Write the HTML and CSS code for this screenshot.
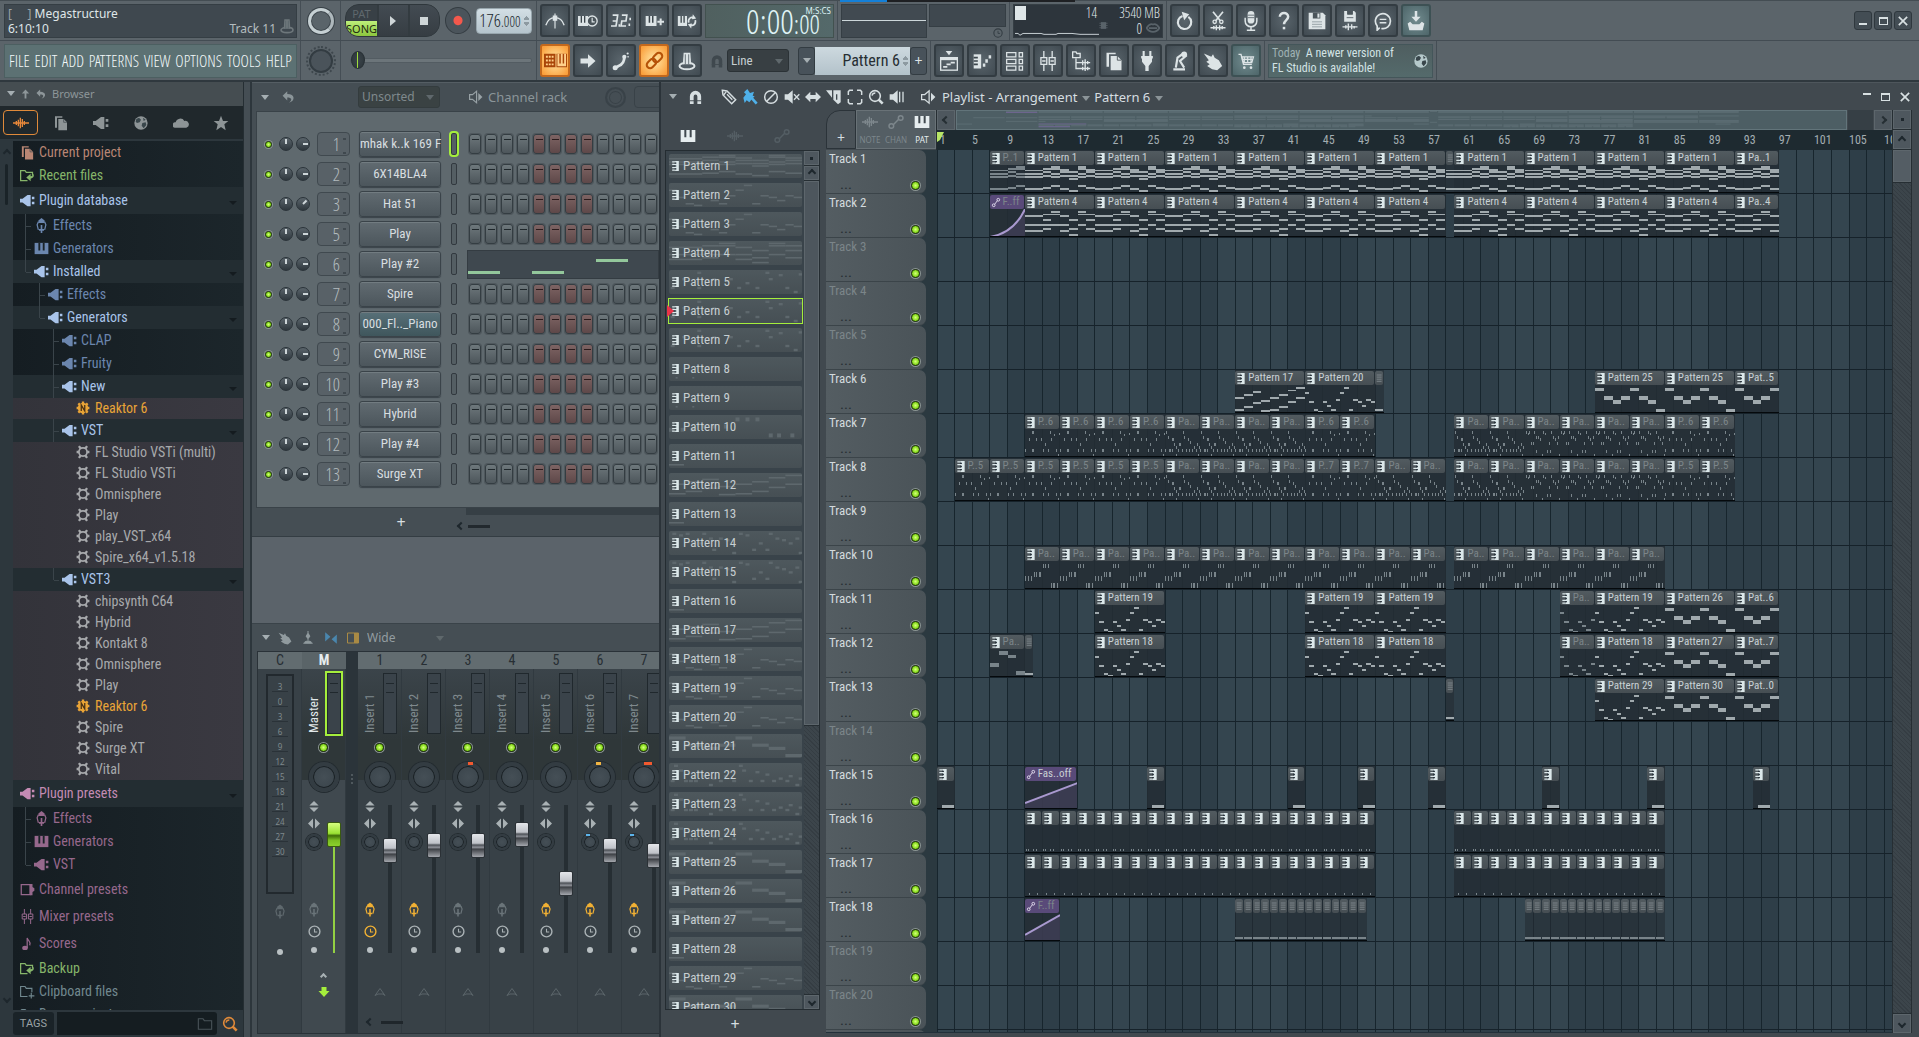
FILE: index.html
```html
<!DOCTYPE html>
<html lang="en">
<head>
<meta charset="utf-8">
<title>Megastructure</title>
<link rel="stylesheet" href="styles.css">
</head>
<body>
<svg class="sprite" aria-hidden="true">
<defs>
<symbol id="i-metronome" viewBox="0 0 24 24"><path d="M12 3v18M10 6h4v5h-4z" fill="currentColor" stroke="currentColor" stroke-width="1.4"/><path d="M1 17C3 11 7 8 12 8s9 3 11 9" fill="none" stroke="currentColor" stroke-width="1.6"/></symbol>
<symbol id="i-waitkeys" viewBox="0 0 24 24"><path d="M0 6h12v12H0z" fill="currentColor"/><path d="M4 6v8M8 6v8" stroke="#3c464c" stroke-width="1.6"/><circle cx="17" cy="12" r="6" fill="#4b555b" stroke="currentColor" stroke-width="1.6"/><path d="M17 8v5h3" fill="none" stroke="currentColor" stroke-width="1.4"/></symbol>
<symbol id="i-countin" viewBox="0 0 24 24"><path d="M2 5h6l-1 7-1 6H0M2 12h5M13 5h6l-1 7h-5l-1 6h6" fill="none" stroke="currentColor" stroke-width="2"/><path d="M9 16h2v3H9zM22 8h2v3h-2zM21 15h2v3h-2z" fill="currentColor"/></symbol>
<symbol id="i-keysplus" viewBox="0 0 24 24"><path d="M2 6h13v12H2z" fill="currentColor"/><path d="M6.500 6v8M10.500 6v8" stroke="#3c464c" stroke-width="1.8"/><path d="M20 9v8M16 13h8" stroke="currentColor" stroke-width="2.400"/></symbol>
<symbol id="i-keysloop" viewBox="0 0 24 24"><path d="M1 6h11v12H1z" fill="currentColor"/><path d="M5 6v8M8.500 6v8" stroke="#3c464c" stroke-width="1.6"/><path d="M14 14c-1-5 3-8 7-5M22 11c1 5-3 8-7 5" fill="none" stroke="currentColor" stroke-width="2"/><path d="M19 4l4 5-5 1zM17 21l-4-5 5-1z" fill="currentColor"/></symbol>
<symbol id="i-typing" viewBox="0 0 24 24"><path d="M0 5h12v14H0zM13 5h11v14H13z" fill="#a94508"/><path d="M2 8h2M5 8h2M8 8h2M2 12h2M5 12h2M8 12h2M2 16h2M5 16h2M8 16h2" stroke="#ffd08a" stroke-width="2"/><path d="M14 15h9v3h-9zM14 5h2v11h-2zM17.500 5h2v11h-2zM21 5h2v11h-2z" fill="#ffd08a"/></symbol>
<symbol id="i-arrow" viewBox="0 0 24 24"><path d="M3 9h9V4l9 8-9 8v-5H3z" fill="currentColor"/></symbol>
<symbol id="i-slide" viewBox="0 0 24 24"><path d="M4 21l5-3c6-2 7-6 7-11" fill="none" stroke="currentColor" stroke-width="3.400"/><circle cx="5" cy="20" r="3" fill="currentColor"/><circle cx="16" cy="7" r="2.500" fill="currentColor"/><circle cx="20" cy="3" r="1.300" fill="currentColor"/><circle cx="20.500" cy="7" r="1" fill="currentColor"/></symbol>
<symbol id="i-link" viewBox="0 0 24 24"><g fill="none" stroke="#b65308" stroke-width="2.200" transform="rotate(-45 12 12)"><rect x="2" y="8.500" width="11" height="7" rx="3.500"/><rect x="11" y="8.500" width="11" height="7" rx="3.500"/></g></symbol>
<symbol id="i-lamp" viewBox="0 0 24 24"><path d="M8 2h8l1 14H7z" fill="currentColor"/><ellipse cx="12" cy="18" rx="9" ry="4" fill="none" stroke="currentColor" stroke-width="2.400"/><path d="M10 4v12M14 4v12" stroke="#556067" stroke-width="1"/></symbol>
<symbol id="i-playlist" viewBox="0 0 24 24"><path d="M8 0h8l-4 5z" fill="currentColor"/><rect x="2" y="8" width="20" height="15" fill="none" stroke="currentColor" stroke-width="1.600"/><path d="M2 9.500h20" stroke="currentColor" stroke-width="3"/><path d="M5 19h5M9 16h5M14 14h5" stroke="currentColor" stroke-width="2"/></symbol>
<symbol id="i-pianoroll" viewBox="0 0 24 24"><path d="M2 4h9v17H2z" fill="currentColor"/><path d="M2 8h5M2 12h5M2 16h5" stroke="#3c464c" stroke-width="2"/><path d="M13 19h3v-4h-3zM16 14h3v-4h-3zM20 9h3V5h-3z" fill="currentColor"/></symbol>
<symbol id="i-rack" viewBox="0 0 24 24"><g fill="none" stroke="currentColor" stroke-width="1.500"><path d="M2 2h11v5H2zM2 10h11v5H2zM2 18h11v5H2zM17 2h4v5h-4zM17 10h4v5h-4zM17 18h4v5h-4z"/></g></symbol>
<symbol id="i-mixer" viewBox="0 0 24 24"><g fill="none" stroke="currentColor" stroke-width="1.600"><path d="M7 0v8M7 16v8M17 0v8M17 16v8M3.500 8h7v8h-7zM13.500 8h7v8h-7zM5 12h4M15 12h4"/></g></symbol>
<symbol id="i-browser" viewBox="0 0 24 24"><g fill="none" stroke="currentColor" stroke-width="1.600"><path d="M2 1h4l1 2h4v5H2zM6 9v12h6M6 14h6"/></g><path d="M12 14h11M14 11v6M17 10v8M20 12v4M12 21h11M14 19v4M17 17v7M20 19v4" stroke="currentColor" stroke-width="1.600"/></symbol>
<symbol id="i-files" viewBox="0 0 24 24"><path d="M3 2h11v2H6v15H3z" fill="currentColor"/><path d="M8 6h8l5 5v12H8z" fill="currentColor"/><path d="M16 6v5h5" fill="none" stroke="#3c464c" stroke-width="1"/></symbol>
<symbol id="i-plug" viewBox="0 0 24 24"><path d="M8 0v6M16 0v6" stroke="currentColor" stroke-width="2.500"/><path d="M5 6h14v3h-1v4l-4 5v6h-4v-6l-4-5V9H5z" fill="currentColor"/></symbol>
<symbol id="i-touch" viewBox="0 0 24 24"><path d="M4 22h14M7 20l2-12 7-5 3 3-7 6 5 8" fill="none" stroke="currentColor" stroke-width="2.600"/><circle cx="17" cy="4" r="3.500" fill="currentColor"/></symbol>
<symbol id="i-hand" viewBox="0 0 24 24"><path d="M1 3l9 4 2-3 2 4 5 3 4 7-6 5-6-1-6-4 3-2-4-3 3-2z" fill="currentColor"/></symbol>
<symbol id="i-cart" viewBox="0 0 24 24"><path d="M3 4h3l3 12h10" fill="none" stroke="currentColor" stroke-width="1.600"/><path d="M7 7h14l-2 7H9zM10 7v7M14 7v7M18 7v7M7 10h13" fill="none" stroke="currentColor" stroke-width="1.400"/><circle cx="10" cy="20" r="1.600" fill="currentColor"/><circle cx="18" cy="20" r="1.600" fill="currentColor"/></symbol>
<symbol id="i-undo" viewBox="0 0 24 24"><path d="M9 6a8 8 0 1 0 7 1" fill="none" stroke="currentColor" stroke-width="2.600"/><path d="M5 1l9 3-6 7z" fill="currentColor" transform="translate(3 0)"/></symbol>
<symbol id="i-cut" viewBox="0 0 24 24"><path d="M6 1l9 11M18 1L9 12" stroke="currentColor" stroke-width="2"/><circle cx="8" cy="13" r="2" fill="none" stroke="currentColor" stroke-width="1.600"/><circle cx="16" cy="13" r="2" fill="none" stroke="currentColor" stroke-width="1.600"/><path d="M3 20h18M7 18v4M10 17v6M14 17v6M17 18v4" stroke="currentColor" stroke-width="1.700"/></symbol>
<symbol id="i-mic" viewBox="0 0 24 24"><rect x="8" y="0" width="8" height="15" rx="4" fill="currentColor"/><path d="M5 8v4a7 7 0 0 0 14 0V8M12 19v4M7 23h10" fill="none" stroke="currentColor" stroke-width="1.800"/><path d="M8 5h8M8 8h8" stroke="#556067" stroke-width="1"/></symbol>
<symbol id="i-help" viewBox="0 0 24 24"><path d="M7 7c0-6 10-6 10 0 0 4-5 4-5 9" fill="none" stroke="currentColor" stroke-width="3"/><rect x="10.500" y="19" width="3" height="3" fill="currentColor"/></symbol>
<symbol id="i-save" viewBox="0 0 24 24"><path d="M2 2h17l3 3v17H2z" fill="currentColor"/><path d="M7 2h9v7H7z" fill="#4b555b"/><path d="M12.500 3h2.500v5h-2.500z" fill="currentColor"/><path d="M6 13h12M6 16h12M6 19h12" stroke="#8c979c" stroke-width="1"/></symbol>
<symbol id="i-savenew" viewBox="0 0 24 24"><path d="M5 0h12l2 2v11H5z" fill="currentColor"/><path d="M9 0h6v4H9zM8 8h8" fill="#4b555b" stroke="#4b555b"/><path d="M3 19h18M7 17v4M10 15v8M14 16v6M17 18v3" stroke="currentColor" stroke-width="1.700"/></symbol>
<symbol id="i-comment" viewBox="0 0 24 24"><path d="M8 20l-3 3v-5a9 9 0 1 1 5 3" fill="none" stroke="currentColor" stroke-width="2"/><path d="M8 10h8M8 14h8" stroke="currentColor" stroke-width="1.700"/></symbol>
<symbol id="i-export" viewBox="0 0 24 24"><path d="M10.500 0h3v7h4L12 13 6.500 7h4z" fill="currentColor"/><path d="M2 15l3-2 3 3h8l3-3 3 2-2 8H4z" fill="currentColor"/></symbol>
<symbol id="i-globe" viewBox="0 0 24 24"><circle cx="12" cy="12" r="10" fill="currentColor"/><path d="M5 6l4-2 3 3-2 4-4 1-2-2zM14 12l5-1 1 4-4 5-3-4zM15 4l4 3-3 2z" fill="#39464b"/></symbol>
<symbol id="i-wave" viewBox="0 0 24 24"><path d="M0 12h24M5 9v6M8 7v10M11 4v16M14 6v12M17 9v6M20 11v2" stroke="currentColor" stroke-width="2"/></symbol>
<symbol id="i-plugin" viewBox="0 0 24 24"><path d="M0 9h4l8-6h5v18h-5l-8-6H0z" fill="currentColor"/><path d="M19 6h4v4h-4zM19 14h4v4h-4z" fill="currentColor"/></symbol>
<symbol id="i-cloud" viewBox="0 0 24 24"><path d="M3 19a4 4 0 0 1 1-8 7 7 0 0 1 13-2 5 5 0 0 1 3 10z" fill="currentColor"/></symbol>
<symbol id="i-star" viewBox="0 0 24 24"><path d="M12 1l3 8h8l-6 5 2 9-7-5-7 5 2-9-6-5h8z" fill="currentColor"/></symbol>
<symbol id="i-recent" viewBox="0 0 24 24"><path d="M12 20H1V4h7l2 3h10v5" fill="none" stroke="currentColor" stroke-width="2"/><path d="M20 8c4 4 2 8-3 9v4l-7-6 7-6v4c3 0 4-2 3-5z" fill="currentColor"/></symbol>
<symbol id="i-clipboard" viewBox="0 0 24 24"><path d="M12 20H1V4h7l2 3h9v6M18 14v9M14 19h9" fill="none" stroke="currentColor" stroke-width="1.800"/></symbol>
<symbol id="i-fx" viewBox="0 0 24 24"><path d="M12 0l5 4v4H7V4z" fill="currentColor"/><path d="M7 6l-2 5 2 8M17 6l2 5-2 8" fill="none" stroke="currentColor" stroke-width="2"/><path d="M12 11v13M8 19h8" stroke="currentColor" stroke-width="2.600"/></symbol>
<symbol id="i-gen" viewBox="0 0 24 24"><path d="M1 3h22v18H1z" fill="currentColor"/><path d="M8.500 3v12M15.500 3v12" stroke="#1a2328" stroke-width="3"/></symbol>
<symbol id="i-gear" viewBox="0 0 24 24"><circle cx="12" cy="12" r="7" fill="none" stroke="currentColor" stroke-width="3"/><path d="M1 12h4M19 12h4M5 2l3 4M19 2l-3 4M5 22l3-4M19 22l-3-4" stroke="currentColor" stroke-width="4"/></symbol>
<symbol id="i-native" viewBox="0 0 24 24"><circle cx="12" cy="12" r="9" fill="currentColor"/><path d="M12 1v22M1 12h22M4 4l16 16M20 4L4 20" stroke="currentColor" stroke-width="4"/><path d="M9 17V7l6 10V7" fill="none" stroke="#4a3316" stroke-width="2.200"/></symbol>
<symbol id="i-chan" viewBox="0 0 24 24"><path d="M2 4h14v16H2z" fill="none" stroke="currentColor" stroke-width="2"/><path d="M16 3h4v5l3 2v4l-3 2v5h-4z" fill="currentColor"/></symbol>
<symbol id="i-note" viewBox="0 0 24 24"><ellipse cx="8" cy="19" rx="4.500" ry="3.500" fill="currentColor"/><path d="M11.500 19V3c1 5 7 6 4 12" fill="none" stroke="currentColor" stroke-width="2"/></symbol>
<symbol id="i-folder" viewBox="0 0 24 24"><path d="M2 4h7l2 3h11v13H2z" fill="none" stroke="currentColor" stroke-width="1.600"/></symbol>
<symbol id="i-search" viewBox="0 0 24 24"><circle cx="10.500" cy="10.500" r="8" fill="none" stroke="currentColor" stroke-width="2.400"/><path d="M16 16l6 6" stroke="currentColor" stroke-width="4"/><path d="M6 10a5 5 0 0 1 5-4" fill="none" stroke="currentColor" stroke-width="2"/></symbol>
<symbol id="i-up" viewBox="0 0 24 24"><path d="M12 2l8 9h-6v11h-4V11H4z" fill="currentColor"/></symbol>
<symbol id="i-back" viewBox="0 0 24 24"><path d="M9 2v5c14 0 14 12 3 15 6-5 5-9-3-9v5L1 10z" fill="currentColor"/></symbol>
<symbol id="i-speaker" viewBox="0 0 24 24"><path d="M1 8h5l7-6v20l-7-6H1z" fill="none" stroke="currentColor" stroke-width="2"/><path d="M16 5l7 7-7 7z" fill="currentColor"/></symbol>
<symbol id="i-magnet" viewBox="0 0 24 24"><path d="M3 23V11a9 9 0 0 1 18 0v12h-6V11a3 3 0 0 0-6 0v12z" fill="currentColor"/><path d="M3 18h18" stroke="#40494f" stroke-width="1.500"/></symbol>
<symbol id="i-pencil" viewBox="0 0 24 24"><path d="M2 2l7 1 13 13-6 6L3 9z" fill="none" stroke="currentColor" stroke-width="2.200"/><path d="M8 4l-4 5M9 8l8 8" stroke="currentColor" stroke-width="2"/></symbol>
<symbol id="i-brush" viewBox="0 0 24 24"><path d="M2 13l4-5-3-3 5-5 4 6 6-2-2 6 3 1-4 4-4 5-4-3-3 4z" fill="currentColor"/><path d="M14 13l8 9" stroke="currentColor" stroke-width="4"/></symbol>
<symbol id="i-erase" viewBox="0 0 24 24"><circle cx="12" cy="12" r="9.500" fill="none" stroke="currentColor" stroke-width="2.200"/><path d="M5 19L19 5" stroke="currentColor" stroke-width="2.200"/></symbol>
<symbol id="i-mute" viewBox="0 0 24 24"><path d="M1 8h5l7-6v20l-7-6H1z" fill="currentColor"/><path d="M15 8l8 8M23 8l-8 8" stroke="currentColor" stroke-width="2"/></symbol>
<symbol id="i-slip" viewBox="0 0 24 24"><path d="M0 12l8-8v5h8V4l8 8-8 8v-5H8v5z" fill="currentColor"/></symbol>
<symbol id="i-slice" viewBox="0 0 24 24"><path d="M0 2h9v11z" fill="currentColor"/><path d="M11 2h11v18l-4 3-7-7z" fill="currentColor"/><path d="M16 8v8" stroke="#40494f" stroke-width="2"/></symbol>
<symbol id="i-select" viewBox="0 0 24 24"><path d="M2 9V4l2-2h5M15 2h5l2 2v5M22 15v5l-2 2h-5M9 22H4l-2-2v-5" fill="none" stroke="currentColor" stroke-width="2.200"/></symbol>
<symbol id="i-playback" viewBox="0 0 24 24"><path d="M1 8h5l7-6v20l-7-6H1z" fill="currentColor"/><path d="M16 4v16M21 4v16" stroke="currentColor" stroke-width="2"/></symbol>
<symbol id="i-auto" viewBox="0 0 24 24"><circle cx="5" cy="18" r="3.500" fill="none" stroke="currentColor" stroke-width="2.200"/><circle cx="19" cy="6" r="3.500" fill="none" stroke="currentColor" stroke-width="2.200"/><path d="M8 16l8-8" stroke="currentColor" stroke-width="2.200"/></symbol>
<symbol id="i-autoclip" viewBox="0 0 10 12"><circle cx="2.500" cy="9" r="1.500" fill="none" stroke="#e6e0f2"/><circle cx="7.500" cy="3" r="1.500" fill="none" stroke="#e6e0f2"/><path d="M3.500 8l3-4" stroke="#e6e0f2"/></symbol>
<symbol id="i-keys" viewBox="0 0 24 24"><path d="M1 3h22v18H1z" fill="currentColor"/><path d="M8 3v11M16 3v11" stroke="#40494f" stroke-width="3"/></symbol>
<symbol id="i-clip" viewBox="0 0 10 12"><path d="M5 0h4v12H5z" fill="#dce8ea"/><path d="M1 1h5M1 4h5M1 8h5M1 11h5" stroke="#dce8ea" stroke-width="1.400"/><path d="M4 2.500h2M4 6h2M4 9.500h2" stroke="#27323a" stroke-width="1.400"/></symbol>
<symbol id="i-clipdim" viewBox="0 0 10 12"><path d="M1 1h7M1 4h7M1 7h7M1 10h7" stroke="#8f999d" stroke-width="1"/></symbol>
<symbol id="i-clock" viewBox="0 0 24 24"><circle cx="12" cy="12" r="10" fill="none" stroke="currentColor" stroke-width="2.600"/><path d="M12 7v6h5" fill="none" stroke="currentColor" stroke-width="2"/></symbol>
<symbol id="i-updown" viewBox="0 0 24 24"><path d="M12 0l10 10H2zM12 24l10-10H2z" fill="currentColor"/></symbol>
<symbol id="i-leftright" viewBox="0 0 24 24"><path d="M0 12l10-10v20zM24 12l-10-10v20z" fill="currentColor"/></symbol>
<symbol id="i-triangle" viewBox="0 0 24 24"><path d="M2 19L12 5l10 14-4-3H8z" fill="none" stroke="currentColor" stroke-width="2"/></symbol>
<symbol id="i-lips" viewBox="0 0 24 24"><path d="M1 12c4-6 7-8 11-6 4-2 7 0 11 6-5 9-17 9-22 0zM5 12h14" fill="none" stroke="currentColor" stroke-width="3"/></symbol>
<symbol id="i-chip" viewBox="0 0 24 24"><path d="M5 3h14v18H5z" fill="currentColor"/><path d="M1 6h22M1 12h22M1 18h22" stroke="currentColor" stroke-width="2"/></symbol>
<symbol id="i-stand" viewBox="0 0 24 24"><path d="M12 0v16M9 9l3-5 3 5-3 4zM4 21h16M6 21c1-5 11-5 12 0" fill="currentColor" stroke="currentColor" stroke-width="1.800"/></symbol>
<symbol id="i-bowtie" viewBox="0 0 24 24"><path d="M2 2l9 8-9 8zM22 6v16l-9-8z" fill="currentColor"/></symbol>
<symbol id="i-dock" viewBox="0 0 24 24"><path d="M1 2h22v20H1z" fill="none" stroke="currentColor" stroke-width="2"/><path d="M14 2h9v20h-9z" fill="currentColor"/></symbol>
<symbol id="i-down" viewBox="0 0 24 24"><path d="M7 2h10v8h6L12 22 1 10h6z" fill="currentColor"/></symbol>
</defs>
</svg>

<header class="topbar">
  <div class="bar">
    <div class="sec sec-info">
      <div class="panel info">
        <div><span class="muted">[&nbsp;&nbsp;&nbsp;&nbsp; ]</span> Megastructure</div>
        <div class="info-row"><span>6:10:10</span><span class="muted info-track">Track 11</span></div>
        <svg class="icon info-lamp"><use href="#i-lamp"/></svg>
      </div>
    </div>
    <div class="sec sec-knob"><div class="knob-main" role="img" aria-label="Main volume"></div></div>
    <div class="sec sec-transport">
      <div class="transport">
        <button class="patsong" type="button"><span>PAT</span><b>SONG</b></button>
        <button class="play" type="button" aria-label="Play"><i class="tri-right"></i></button>
        <button class="stop" type="button" aria-label="Stop"><i></i></button>
      </div>
      <button class="record" type="button" aria-label="Record"></button>
      <div class="tempo"><span>176<small>.000</small></span><i class="spin"></i></div>
    </div>
    <div class="sec">
      <button class="tool" type="button" aria-label="Metronome"><svg class="icon"><use href="#i-metronome"/></svg></button>
      <button class="tool" type="button" aria-label="Wait for input"><svg class="icon"><use href="#i-waitkeys"/></svg></button>
      <button class="tool" type="button" aria-label="Countdown"><svg class="icon"><use href="#i-countin"/></svg></button>
      <button class="tool" type="button" aria-label="Overdub"><svg class="icon"><use href="#i-keysplus"/></svg></button>
      <button class="tool" type="button" aria-label="Loop record"><svg class="icon"><use href="#i-keysloop"/></svg></button>
      <div class="panel time"><span class="time-big">0:00</span><span class="time-small">:00</span><span class="time-unit">M:S:CS</span></div>
    </div>
    <div class="sec sec-scope">
      <div class="panel scope"></div>
      <div class="scope-side"><div class="panel"></div><svg class="icon"><use href="#i-clock"/></svg></div>
    </div>
    <div class="sec">
      <div class="panel cpu">
        <div class="cpu-a"><i></i><span>14</span></div><div class="cpu-b">3540 MB</div>
        <svg class="cpu-line" viewBox="0 0 84 18" preserveAspectRatio="none"><path d="M0 14l3 0 2 2 3-2h18l3 1h12l2-1h14l8 1h19" fill="none" stroke="#cfd8dc"/></svg>
        <div class="cpu-c"><svg class="icon"><use href="#i-chip"/></svg><span>0</span><svg class="icon"><use href="#i-lips"/></svg></div>
      </div>
    </div>
    <div class="sec sec-open">
      <button class="tool" type="button" aria-label="Undo"><svg class="icon"><use href="#i-undo"/></svg></button>
      <button class="tool" type="button" aria-label="Cut"><svg class="icon"><use href="#i-cut"/></svg></button>
      <button class="tool" type="button" aria-label="Record audio"><svg class="icon"><use href="#i-mic"/></svg></button>
      <button class="tool" type="button" aria-label="Help"><svg class="icon"><use href="#i-help"/></svg></button>
      <button class="tool" type="button" aria-label="Save"><svg class="icon"><use href="#i-save"/></svg></button>
      <button class="tool" type="button" aria-label="Save as new"><svg class="icon"><use href="#i-savenew"/></svg></button>
      <button class="tool" type="button" aria-label="Comments"><svg class="icon"><use href="#i-comment"/></svg></button>
      <button class="tool teal" type="button" aria-label="Export"><svg class="icon"><use href="#i-export"/></svg></button>
    </div>
    <div class="winbtns">
      <button type="button" aria-label="Minimize"><i class="w-min"></i></button>
      <button type="button" aria-label="Restore"><i class="w-max"></i></button>
      <button type="button" aria-label="Close"><svg viewBox="0 0 12 12" class="w-x"><path d="M1 1l10 10M11 1L1 11"/></svg></button>
    </div>
  </div>
  <div class="bar">
    <div class="sec sec-info">
      <nav class="menu">
        <button type="button">FILE</button><button type="button">EDIT</button><button type="button">ADD</button><button type="button">PATTERNS</button><button type="button">VIEW</button><button type="button">OPTIONS</button><button type="button">TOOLS</button><button type="button">HELP</button>
      </nav>
    </div>
    <div class="sec sec-knob"><div class="knob-pitch" role="img" aria-label="Main pitch"></div></div>
    <div class="sec sec-transport"><input class="songpos" type="range" min="0" max="100" value="0" aria-label="Song position"></div>
    <div class="sec sec-snap">
      <button class="tool on" type="button" aria-label="Typing keyboard"><svg class="icon"><use href="#i-typing"/></svg></button>
      <button class="tool" type="button" aria-label="Step edit"><svg class="icon"><use href="#i-arrow"/></svg></button>
      <button class="tool" type="button" aria-label="Scroll"><svg class="icon"><use href="#i-slide"/></svg></button>
      <button class="tool on" type="button" aria-label="Link"><svg class="icon"><use href="#i-link"/></svg></button>
      <button class="tool" type="button" aria-label="Multilink"><svg class="icon"><use href="#i-lamp"/></svg></button>
      <svg class="icon snap-magnet"><use href="#i-magnet"/></svg>
      <span class="pick pick-snap"><select aria-label="Snap"><option>Line</option></select></span>
      <div class="patsel">
        <button type="button" aria-label="Pattern list"><i class="tri-down"></i></button>
        <div class="patfield"><input type="text" value="Pattern 6" aria-label="Pattern"><i class="spin"></i></div>
        <button type="button" aria-label="Add pattern">+</button>
      </div>
    </div>
    <div class="sec">
      <button class="tool" type="button" aria-label="Playlist"><svg class="icon"><use href="#i-playlist"/></svg></button>
      <button class="tool" type="button" aria-label="Piano roll"><svg class="icon"><use href="#i-pianoroll"/></svg></button>
      <button class="tool" type="button" aria-label="Channel rack"><svg class="icon"><use href="#i-rack"/></svg></button>
      <button class="tool" type="button" aria-label="Mixer"><svg class="icon"><use href="#i-mixer"/></svg></button>
      <button class="tool" type="button" aria-label="Browser"><svg class="icon"><use href="#i-browser"/></svg></button>
      <button class="tool" type="button" aria-label="Files"><svg class="icon"><use href="#i-files"/></svg></button>
      <button class="tool" type="button" aria-label="Plugins"><svg class="icon"><use href="#i-plug"/></svg></button>
      <button class="tool" type="button" aria-label="Touch"><svg class="icon"><use href="#i-touch"/></svg></button>
      <button class="tool" type="button" aria-label="Gestures"><svg class="icon"><use href="#i-hand"/></svg></button>
      <button class="tool teal" type="button" aria-label="Shop"><svg class="icon"><use href="#i-cart"/></svg></button>
    </div>
    <div class="sec">
      <a class="panel news" href="#"><span><em>Today</em>&nbsp; A newer version of<br>FL Studio is available!</span><svg class="icon"><use href="#i-globe"/></svg></a>
    </div>
  </div>
</header>

<main class="desk">
  <aside class="browser">
    <div class="browser-head"><i class="tri-down"></i><svg class="icon"><use href="#i-up"/></svg><svg class="icon"><use href="#i-back"/></svg><span>Browser</span></div>
    <div class="browser-tabs">
      <button class="sel" type="button" aria-label="All"><svg class="icon"><use href="#i-wave"/></svg></button>
      <button type="button" aria-label="Project"><svg class="icon"><use href="#i-files"/></svg></button>
      <button type="button" aria-label="Plugins"><svg class="icon"><use href="#i-plugin"/></svg></button>
      <button type="button" aria-label="Library"><svg class="icon"><use href="#i-globe"/></svg></button>
      <button type="button" aria-label="Cloud"><svg class="icon"><use href="#i-cloud"/></svg></button>
      <button type="button" aria-label="Starred"><svg class="icon"><use href="#i-star"/></svg></button>
    </div>
    <div class="browser-body">
      <div class="browser-scroll"><i class="chev up"></i><b></b><i class="chev down"></i></div>
      <ul class="tree" id="tree"></ul>
    </div>
    <div class="browser-foot">
      <button class="tags" type="button">TAGS</button>
      <label class="find"><input type="text" aria-label="Search files"><svg class="icon"><use href="#i-folder"/></svg></label>
      <button class="go" type="button" aria-label="Search"><svg class="icon"><use href="#i-search"/></svg></button>
    </div>
  </aside>
  <div class="splitter"></div>

  <div class="middle">
    <section class="rack">
      <div class="win-head rack-head">
        <i class="tri-down"></i><svg class="icon"><use href="#i-back"/></svg>
        <span class="pick pick-group"><select aria-label="Channel filter"><option>Unsorted</option></select></span>
        <i class="dots"></i><svg class="icon"><use href="#i-speaker"/></svg><span>Channel rack</span>
        <i class="swing"></i><i class="graphbtn"></i>
      </div>
      <div class="rack-body" id="rack"></div>
      <div class="rack-foot"><div class="rack-shade"></div><button type="button" aria-label="Add channel">+</button><i class="chev left"></i><b></b></div>
    </section>
    <div class="desk-gap"></div>
    <section class="mixer">
      <div class="win-head mixer-head">
        <i class="tri-down"></i><svg class="icon"><use href="#i-hand"/></svg><svg class="icon"><use href="#i-stand"/></svg><svg class="icon blue"><use href="#i-bowtie"/></svg><svg class="icon gold"><use href="#i-dock"/></svg>
        <span class="pick pick-wide"><select aria-label="Mixer view"><option>Wide</option></select></span>
      </div>
      <div class="mixer-body" id="mixer"></div>
    </section>
  </div>

  <section class="playlist">
    <div class="win-head pl-head">
      <i class="tri-down"></i><svg class="icon"><use href="#i-magnet"/></svg>
      <div class="pl-tools" id="pltools"></div>
      <svg class="icon"><use href="#i-speaker"/></svg>
      <h1>Playlist - Arrangement <i class="tri-down"></i> Pattern 6 <i class="tri-down"></i></h1>
      <div class="pl-win"><i class="w-min"></i><i class="w-max"></i><svg viewBox="0 0 12 12" class="w-x"><path d="M1 1l10 10M11 1L1 11"/></svg></div>
    </div>
    <div class="pl-main">
      <div class="picker">
        <div class="picker-tabs"><svg class="icon on"><use href="#i-keys"/></svg><svg class="icon"><use href="#i-wave"/></svg><svg class="icon"><use href="#i-auto"/></svg></div>
        <div class="picker-box">
          <div class="picker-list" id="picker"></div>
          <div class="vscroll"><span class="cell sq"></span><span class="cell"><i class="chev up"></i></span><b></b><s></s><span class="cell"><i class="chev down"></i></span></div>
        </div>
        <button class="picker-add" type="button" aria-label="Add pattern">+</button>
      </div>
      <div class="arr">
        <div class="arr-top">
          <div class="arr-corner">
            <button class="addtrack" type="button" aria-label="Add track">+</button>
            <div class="modes">
              <svg class="icon"><use href="#i-wave"/></svg><svg class="icon"><use href="#i-auto"/></svg><svg class="icon on"><use href="#i-keys"/></svg>
              <span>NOTE</span><span>CHAN</span><span class="on">PAT</span>
            </div>
          </div>
          <div class="arr-nav">
            <div class="navrow"><span class="cell"><i class="chev left"></i></span><svg class="minimap" id="minimap" viewBox="0 0 109 20" preserveAspectRatio="none"></svg><s></s><span class="cell"><i class="chev right"></i></span></div>
            <div class="ruler" id="ruler"></div>
          </div>
        </div>
        <div class="tracks" id="tracks"></div>
      </div>
      <div class="vscroll big"><span class="cell sq"></span><span class="cell"><i class="chev up"></i></span><b></b><s></s><span class="cell"><i class="chev down"></i></span></div>
    </div>
  </section>
</main>
<script src="app.js"></script>
</body>
</html>
```
FILE: styles.css
```css
:root {
  --cond: "Roboto Condensed", "Open Sans Condensed", sans-serif;
  --light: "Open Sans Condensed Light", "Roboto Condensed", sans-serif;
  --sans: "Noto Sans", "Open Sans", sans-serif;
  --led: #a5ee3c;
}
* { box-sizing: border-box; }
body { margin: 0; height: 100vh; overflow: hidden; display: flex; flex-direction: column; background: #5b646a; color: #d5dde0; font: 13px/16px var(--cond); }
button, input, select { font: inherit; color: inherit; margin: 0; padding: 0; border: 0; background: none; border-radius: 0; }
.sprite { position: absolute; width: 0; height: 0; }
.icon { width: 16px; height: 16px; display: block; flex: none; }
.tri-down { width: 0; height: 0; border: 4px solid transparent; border-top: 5px solid #a5aeb2; border-bottom: 0; flex: none; display: inline-block; }
.tri-right { width: 0; height: 0; border: 5px solid transparent; border-left: 6px solid #cfd6d8; border-right: 0; }
.chev { width: 6px; height: 6px; border: solid #1e272d; border-width: 2px 0 0 2px; display: block; flex: none; }
.chev.up { transform: rotate(45deg); }
.chev.down { transform: rotate(225deg); }
.chev.left { transform: rotate(-45deg); }
.chev.right { transform: rotate(135deg); }

/* top bar */
.topbar { flex: none; border-bottom: 2px solid #2f383e; position: relative; border-top: 1px solid #444d53; }
.topbar::before { content: ""; position: absolute; top: -1px; left: 840px; width: 47px; height: 2px; background: #1480d8; box-shadow: 47px 0 #1e2023, 94px 0 #1e2023, 141px 0 #1e2023, 188px 0 #1e2023; }
.bar { display: flex; height: 40px; border-bottom: 1px solid #434c53; background: #5b646a; }
.bar + .bar { height: 39px; border-bottom: 0; }
.sec { display: flex; align-items: center; gap: 3px; padding: 0 3px; border-right: 1px solid #454e55; flex: none; }
.sec-open { border: 0; flex: 1; }
.sec-info { width: 301px; padding: 0 3px 0 4px; }
.sec-knob { width: 40px; justify-content: center; }
.sec-transport { width: 196px; gap: 5px; padding: 0 4px; }
.panel { background: #3f484f; border: 1px solid #353e44; height: 34px; position: relative; }
.info { flex: 1; font: 12px/15px var(--sans); color: #dfe6e8; padding: 1px 20px 0 3px; }
.info-row { display: flex; justify-content: space-between; }
.muted { color: #98a1a5; }
.info-track { color: #b4bcbf; }
.info-lamp { position: absolute; right: 1px; bottom: 3px; color: #6e777b; }
.knob-main { width: 26px; height: 26px; border-radius: 50%; background: #5a646a; border: 3px solid #c6d0d3; border-right-color: #aeb8bc; box-shadow: 0 0 0 1px #384147, inset 0 0 0 1px #3e474d; }
.knob-pitch { width: 24px; height: 24px; border-radius: 50%; background: #4a535a; border: 2px solid #333c42; outline: 2px dotted #3e474d; outline-offset: 1px; }
.transport { display: flex; width: 97px; height: 33px; border-radius: 14px; overflow: hidden; background: #333b40; gap: 2px; border: 1px solid #2f373c; }
.transport button { flex: 1; display: flex; align-items: center; justify-content: center; background: linear-gradient(#434b52, #363d43); }
.transport .patsong { flex-direction: column; align-items: stretch; font: 11px/15px var(--sans); color: #5f686d; background: #384046; }
.patsong b { font: 11px/15px var(--sans); background: linear-gradient(#bdf07a, #8cc63e); color: #1d2a10; }
.patsong span { padding-top: 1px; }
.stop i { width: 8px; height: 8px; background: #cfd6d8; }
.record { width: 27px; height: 27px; border-radius: 50%; background: radial-gradient(#f4584c 0 4px, #4b545b 5px); border: 1px solid #343c42; }
.tempo { flex: none; width: 56px; height: 26px; border-radius: 4px; background: linear-gradient(#d3dfe5, #b5c4cc); border: 1px solid #98a6ad; color: #20282d; display: flex; align-items: center; justify-content: center; gap: 3px; font: 18px/22px var(--light); }
.tempo small { font-size: 14px; }
.spin { width: 5px; height: 10px; background: conic-gradient(from 135deg at 50% 0, #8d9aa1 90deg, transparent 0) 0 0 / 100% 4px no-repeat, conic-gradient(from -45deg at 50% 100%, #8d9aa1 90deg, transparent 0) 0 100% / 100% 4px no-repeat; }
.tool { width: 30px; height: 33px; flex: none; display: flex; align-items: center; justify-content: center; border: 2px solid #333c42; border-radius: 3px; background: radial-gradient(#5a656c, #404a51); color: #dde4e6; }
.tool .icon { width: 20px; height: 20px; }
.tool.on { background: radial-gradient(#ffe9a8, #fba03c 90%); border-color: #c4691d; }
.tool.on .icon { width: 23px; height: 23px; }
.tool.teal { background: radial-gradient(#728c8f, #4d6569); border-color: #3d5154; }
.time { width: 129px; background: linear-gradient(90deg, #50605f, #54696a); color: #dff3f5; display: flex; align-items: baseline; justify-content: flex-end; padding: 0 13px 0 0; border-color: #42514f; font-family: var(--light); }
.time-big { font-size: 34px; line-height: 32px; }
.time-small { font-size: 26px; line-height: 32px; }
.time-unit { position: absolute; top: 1px; right: 2px; font: 8px/9px var(--sans); }
.sec-scope { gap: 2px; }
.scope { width: 86px; background: linear-gradient(#cdd7da, #cdd7da) 0 50% / 100% 1px no-repeat #414a51; }
.scope-side { width: 77px; height: 34px; color: #333c42; }
.scope-side .panel { height: 23px; }
.scope-side .icon { width: 10px; height: 10px; margin: 1px 3px 0 auto; }
.cpu { width: 150px; display: grid; grid-template-columns: 84px 1fr; grid-template-rows: 16px 1fr; background: #2d353c; color: #e0e7e9; text-align: right; padding: 0 2px 0 1px; font: 14px/15px var(--light); }
.cpu-a { display: flex; justify-content: space-between; padding-right: 2px; }
.cpu-a i { width: 11px; background: #dfe6e8; margin: 1px 0; }
.cpu-line { width: 84px; height: 16px; }
.cpu-c { display: flex; justify-content: flex-end; gap: 4px; }
.cpu-c .icon { color: #59636a; width: 14px; height: 14px; }
.cpu-c .icon:first-child { width: 9px; height: 9px; margin-right: auto; }
.winbtns { display: flex; align-items: center; gap: 2px; padding-right: 7px; }
.winbtns button { width: 18px; height: 19px; border-radius: 3px; background: #434d54; border: 1px solid #2f383e; display: flex; align-items: center; justify-content: center; }
.w-min { width: 8px; height: 2px; background: #d8e0e2; display: block; }
.winbtns .w-min { margin-top: 6px; }
.w-max { width: 9px; height: 8px; border: 1px solid #d8e0e2; border-top-width: 2px; display: block; }
.w-x { width: 10px; height: 10px; stroke: #d8e0e2; stroke-width: 2; }
.menu { display: flex; flex: 1; height: 34px; justify-content: space-between; padding: 0 4px; align-items: center; background: #5c7173; border: 1px solid #4c5f61; color: #f2f8f9; font: 16px/20px var(--light); }
.songpos { appearance: none; flex: 1; height: 22px; margin-left: 5px; }
.songpos::-webkit-slider-runnable-track { height: 5px; background: #6c757a; border: 1px solid #535c62; border-radius: 2px; }
.songpos::-webkit-slider-thumb { appearance: none; width: 14px; height: 18px; margin-top: -8px; border-radius: 50%; border: 1px solid #262e33; background: linear-gradient(90deg, transparent 5px, #9edc3c 5px 6px, transparent 6px), radial-gradient(#3b444a, #2b3439); }
.snap-magnet { width: 14px; height: 14px; margin: 0 0 0 5px; color: #3f484e; }
.pick { position: relative; display: flex; background: #383f43; border: 1px solid #2b3236; border-radius: 3px; }
.pick::after { content: ""; position: absolute; right: 5px; top: 50%; margin-top: -2px; border: 4px solid transparent; border-top: 5px solid #5f686c; border-bottom: 0; }
.pick select { appearance: none; width: 100%; padding-left: 3px; color: #c7cfd2; outline: 0; }
.pick-snap { width: 62px; height: 23px; }
.patsel { display: flex; height: 28px; margin-left: 6px; }
.patsel button { width: 17px; border: 1px solid #333c42; background: #48525a; border-radius: 3px; display: flex; align-items: center; justify-content: center; color: #dde4e6; font: 14px/16px var(--sans); }
.patfield { width: 95px; display: flex; align-items: center; gap: 3px; padding-right: 2px; background: linear-gradient(#cdd9df, #b3c2ca); color: #262e33; font-size: 16px; }
.patfield input { flex: 1; min-width: 0; height: 28px; text-align: right; }
.news { width: 165px; background: linear-gradient(#4f5e60, #546a6b); border-color: #44565a; color: #d3e3e5; text-decoration: none; display: flex; align-items: center; justify-content: space-between; padding: 0 3px; font-size: 12px; line-height: 15px; }
.news em { font-style: normal; color: #9fb2b4; }
.news .icon { color: #b5c9cb; }

/* layout */
.desk { flex: 1; min-height: 0; display: flex; }
.browser { width: 244px; flex: none; display: flex; flex-direction: column; background: #2d373d; border-right: 1px solid #252e33; }
.splitter { width: 8px; flex: none; background: #454e54; border-right: 2px solid #2d363c; }
.middle { width: 407px; flex: none; display: flex; flex-direction: column; background: #454e54; overflow: hidden; }
.playlist { flex: 1; min-width: 0; display: flex; flex-direction: column; background: #41494f; border-left: 2px solid #2b3339; }

/* browser */
.browser-head { height: 24px; background: #454d51; display: flex; align-items: center; gap: 5px; padding: 0 0 1px 7px; color: #8d9699; font: 11px/14px var(--sans); }
.browser-head .icon { width: 11px; height: 12px; }
.browser-tabs { height: 33px; background: #20282c; display: flex; align-items: center; gap: 5px; padding: 0 3px; color: #8d9496; }
.browser-tabs button { width: 35px; height: 25px; border-radius: 4px; display: flex; align-items: center; justify-content: center; border: 1px solid transparent; }
.browser-tabs .sel { border-color: #e08a3a; color: #e8883a; }
.browser-body { flex: 1; min-height: 0; display: flex; padding-top: 2px; }
.browser-scroll { width: 13px; flex: none; display: flex; flex-direction: column; align-items: center; padding: 9px 0 8px; }
.browser-scroll b { width: 3px; height: 41px; background: #1a2328; margin-top: 8px; border-radius: 2px; }
.browser-scroll .down { margin-top: auto; }
.tree { list-style: none; margin: 0; padding: 0; flex: 1; overflow: hidden; background: linear-gradient(90deg, #151d22, #1c262b); }
.tree li { position: relative; display: flex; align-items: center; gap: 4px; height: 23px; font-size: 14px; white-space: nowrap; padding-bottom: 1px; }
.tree li.tall { height: 27px; }
.tree li.plug { height: 21px; gap: 5px; background: linear-gradient(90deg, #33333a, #3a3941); color: #a7a9ac; }
.tree li.plug .icon { width: 14px; height: 14px; }
.tree li.open { background: #232d32; }
.tree li.open::after { content: ""; position: absolute; right: 6px; top: 50%; border: 4px solid transparent; border-top: 4px solid #141b1f; border-bottom: 0; }
.tree .icon { width: 15px; height: 15px; }
.tree .rail { position: absolute; width: 6px; top: 0; bottom: 0; border-left: 1px solid #3a444a; }
.tree .rail::after { content: ""; position: absolute; left: 0; right: 0; top: 50%; border-top: 1px solid #3a444a; }
.tree .rail.last { bottom: 50%; }
.tree .rail.last::after { top: 100%; }
.l0 { padding-left: 7px; } .l1 { padding-left: 21px; } .l2 { padding-left: 35px; } .l3 { padding-left: 49px; } .l4 { padding-left: 63px; }
.c-salmon { color: #b98674; } .c-green { color: #86b56a; } .c-blue { color: #a9c4ea; } .c-dblue { color: #6b86ae; } .c-pink { color: #c48bb4; } .c-dpink { color: #96688c; } .c-slate { color: #71888f; } .tree li.c-gold { color: #e9a437; }
.browser-foot { height: 27px; display: flex; align-items: center; padding: 0 3px 0 13px; gap: 3px; }
.tags { width: 41px; height: 23px; flex: none; background: #1a2328; border-radius: 3px; color: #9aa2a5; font: 11px/14px "Roboto", sans-serif; }
.find { flex: 1; min-width: 0; height: 23px; background: #151d21; display: flex; align-items: center; padding-right: 4px; border-radius: 0 3px 3px 0; color: #4a5459; }
.find input { flex: 1; min-width: 0; height: 23px; }
.go { color: #e08a3a; padding: 0 2px; }

/* windows */
.win-head { height: 28px; flex: none; display: flex; align-items: center; background: #454e54; color: #909a9e; font: 13px/18px var(--sans); white-space: nowrap; }
.rack { background: #454e54; border-top: 1px solid #555e64; }
.rack-head { padding-left: 9px; color: #8b9599; }
.rack-head .icon { width: 14px; margin-left: 13px; }
.pick-group { width: 82px; height: 22px; margin-left: 62px; background: #3a4243; border-color: #343c3e; font-size: 12px; flex: none; }
.pick-group select { color: #7f898c; }
.dots { width: 2px; height: 16px; margin-left: 13px; background: repeating-linear-gradient(#6a7378 0 2px, transparent 2px 4px); }
.rack-head .dots + .icon { margin: 0 5px 0 16px; color: #98a2a6; }
.swing { width: 21px; height: 21px; border-radius: 50%; border: 2px solid #394248; margin-left: 38px; box-shadow: inset 0 0 0 2px #454e54, inset 0 0 0 3px #394248; flex: none; }
.graphbtn { width: 40px; height: 22px; border: 1px solid #394248; border-radius: 4px; margin-left: 8px; flex: none; }
.rack-body { margin-left: 4px; padding: 17px 0 17px 7px; background: #5f696e; border: solid #394248; border-width: 1px 0 1px 1px; height: 397px; }
.ch { height: 30px; display: flex; align-items: center; }
.led { appearance: none; width: 9px; height: 9px; border-radius: 50%; background: radial-gradient(#d5ff7a, #86dc1c 60%); border: 1px solid #23380c; box-shadow: 0 0 0 1px #8a9493; flex: none; display: block; }
.ch .led { width: 7px; height: 7px; margin: 0 7px 0 1px; }
.knob { width: 14px; height: 14px; border-radius: 50%; background: linear-gradient(#5a646b, #2f383e); border: 1px solid #2b343a; position: relative; margin-right: 3px; flex: none; }
.knob::after { content: ""; position: absolute; left: 5px; top: 1px; width: 2px; height: 5px; background: #cdd5d8; transform-origin: 1px 5px; }
.knob.e::after { transform: rotate(90deg); }
.knob.ne::after { transform: rotate(45deg); }
.ch-num { width: 33px; height: 24px; border: 1px solid #40494f; border-radius: 4px; background: #586167; color: #b4bcbf; font: 18px/22px var(--light); text-align: right; padding-right: 9px; margin-left: 4px; flex: none; position: relative; }
.ch-num::after { content: ""; position: absolute; right: 3px; top: 5px; width: 3px; height: 12px; border: solid #3f484e; border-width: 2px 0; }
.ch-name { width: 82px; height: 26px; flex: none; margin-left: 9px; border: 1px solid #3a4349; border-radius: 3px; background: linear-gradient(#616b71, #4c565c); color: #d8dee0; font: 13px/20px var(--cond); white-space: nowrap; box-shadow: 0 1px 1px #3a4349, inset 0 1px #727c81; }
.ch-name.teal { background: linear-gradient(#587078, #3f565c); }
.ch-sel { width: 6px; height: 22px; border: 1px solid #32393f; border-radius: 2px; background: #545e63; margin: 0 12px 0 10px; flex: none; }
.ch-sel.on { outline: 2px solid var(--led); }
.step { appearance: none; width: 12px; height: 20px; flex: none; margin-right: 4px; border-radius: 3px; border: 1px solid #343d42; background: linear-gradient(#1f272b, #1f272b) 50% 4px / 7px 1px no-repeat, linear-gradient(#6e787c, #4d565b); box-shadow: 0 0 0 1px #4f585d; }
.step.red { background: linear-gradient(#2b1c1d, #2b1c1d) 50% 4px / 7px 1px no-repeat, linear-gradient(#7e6464, #5e4849); }
.roll { width: 192px; height: 29px; background: #3f484f; border: 1px solid #343c42; flex: none; margin-left: -2px; }
.roll rect { fill: #93c79b; }
.rack-foot { height: 29px; display: flex; align-items: center; position: relative; color: #d8dee0; border-bottom: 1px solid #343d43; }
.rack-shade { position: absolute; left: 214px; right: 0; top: 0; height: 7px; background: #363f45; }
.rack-foot button { width: 30px; margin-left: 134px; font: 16px/16px var(--sans); }
.rack-foot .chev { margin: 8px 0 0 42px; }
.rack-foot b { width: 22px; height: 3px; background: #22292e; margin: 8px 0 0 4px; }
.desk-gap { height: 86px; background: #5b636a; flex: none; }
.mixer { flex: 1; display: flex; flex-direction: column; border-top: 1px solid #3a4349; padding-bottom: 3px; min-height: 0; }
.mixer-head { height: 27px; padding-left: 10px; gap: 7px; font-size: 12px; }
.mixer-head .icon { width: 16px; height: 14px; }
.mixer-head .blue { color: #4a86ad; }
.mixer-head .gold { color: #a98a44; width: 14px; height: 12px; }
.pick-wide { width: 82px; background: none; border: 0; }
.pick-wide select { color: #939da1; padding: 0; }
.mixer-body { flex: 1; margin-left: 5px; display: flex; overflow: hidden; background: #384147; border: 1px solid #2a3238; border-right: 0; min-height: 0; position: relative; }
.strip { width: 44px; flex: none; display: flex; flex-direction: column; border-right: 1px solid #313a40; }
.strip-no { height: 17px; background: #626c70; color: #272e33; font-size: 14px; line-height: 17px; text-align: center; margin-right: -1px; }
.strip.master { background: #40494f; }
.strip.master .strip-no { color: #e6ecee; background: #5a6468; font-weight: bold; }
.strip-top { height: 71px; display: flex; padding: 4px 4px 0 3px; justify-content: space-between; align-items: flex-start; background: linear-gradient(#3b444a, #2f3739); }
.strip-name { writing-mode: vertical-rl; transform: rotate(180deg); height: 60px; color: #7f898d; font-size: 13px; line-height: 18px; }
.master .strip-name { color: #e1e8ea; }
.meter { width: 14px; height: 61px; border: 1px solid #20282d; background: linear-gradient(#20282d, #20282d) 50% 9px / 8px 1px no-repeat, linear-gradient(#20282d, #20282d) 50% 18px / 8px 1px no-repeat, #3a434a; }
.master .meter { outline: 2px solid var(--led); outline-offset: 0; }
.strip-led { height: 14px; background: #2f3739; display: flex; justify-content: center; align-items: center; }
.pan { height: 46px; display: flex; justify-content: center; padding-top: 8px; background: linear-gradient(#2f3739 26px, transparent 26px); }
.pan i, .sep { width: 30px; height: 30px; border-radius: 50%; background: radial-gradient(#454f56, #39434a); border: 4px solid #333c42; box-shadow: inset 0 0 0 1px #1b2226, 0 0 0 1px #232b30; display: block; position: relative; }
.pan .tick::before { content: ""; position: absolute; top: -4px; left: 11px; width: 5px; height: 3px; background: #f1592f; }
.pan .tick.w::before { width: 8px; }
.pan .tick.y::before { left: 7px; background: #f0b443; }
.sep { width: 16px; height: 16px; border-width: 2px; }
.sep.b::before { content: ""; position: absolute; top: -2px; left: 2px; width: 4px; height: 2px; background: #5cb3ea; }
.strip-low { height: 160px; display: flex; padding: 0 4px 0 4px; justify-content: space-between; }
.strip-icons { width: 16px; display: flex; flex-direction: column; align-items: center; color: #a9b1b4; }
.strip-icons .icon { width: 12px; height: 17px; margin-bottom: 0; }
.strip-icons .icon:nth-child(1) { height: 11px; margin: 1px 0 3px; }
.strip-icons .sep { margin-top: 2px; }
.strip-icons .fx { margin: 51px 0 7px; width: 14px; color: #6a7479; }
.strip-icons .clk { height: 13px; width: 13px; }
.strip-icons .gold { color: #f0b034; }
.dot { width: 6px; height: 6px; border-radius: 50%; background: #b9c0c3; margin-top: 9px; }
.fader { appearance: none; writing-mode: vertical-lr; direction: rtl; width: 14px; height: 148px; margin-top: 5px; background: linear-gradient(90deg, transparent 5px, #262e33 5px 9px, transparent 9px); }
.fader::-webkit-slider-thumb { appearance: none; width: 14px; height: 25px; border-radius: 2px; border: 1px solid #2b3136; background: linear-gradient(#e4e6ea, #bfc2c8 40%, #4d5157 48%, #8b8e95 58%, #3f4247 66%, #a4a7ad); }
.master .fader { background: linear-gradient(90deg, transparent 6px, #93d043 6px 8px, transparent 8px) 0 30px no-repeat; }
.master .fader::-webkit-slider-thumb { background: linear-gradient(#d6ff7e, #9be234 45%, #3f6d08 55%, #7bbd22 75%, #8bd02c); border-color: #3a5a10; }
.strip-foot { flex: 1; display: flex; flex-direction: column; align-items: center; padding-top: 26px; color: #5b656a; }
.strip-foot .icon { width: 12px; height: 12px; }
.master .strip-foot { padding-top: 14px; color: var(--led); }
.master .strip-foot .chev { border-color: #a7b0b3; width: 5px; height: 5px; margin-bottom: 7px; }
.scale { margin: 5px 8px 9px; height: 220px; width: 28px; border: 2px solid #22292e; display: flex; flex-direction: column; align-items: center; padding-top: 6px; color: #7f898d; font: 8px/9px var(--sans); gap: 5px; overflow: hidden; }
.scale span { border-bottom: 1px solid #2a3238; width: 16px; text-align: center; height: 10px; }
.cur { display: flex; flex-direction: column; align-items: center; color: #5e686d; gap: 29px; }
.cur .icon { height: 17px; width: 14px; }
.cur .dot { margin: 0; }
.mix-split { width: 12px; flex: none; background: #2b343a; display: flex; align-items: flex-start; justify-content: center; padding-top: 122px; }
.mix-split i { width: 2px; height: 10px; background: repeating-linear-gradient(#4f585d 0 2px, transparent 2px 4px); }
.mix-scroll { position: absolute; left: 109px; bottom: 8px; display: flex; gap: 8px; align-items: center; }
.mix-scroll b { width: 22px; height: 3px; background: #1f262b; }

/* playlist */
.pl-head { background: #41494f; height: 28px; border-top: 1px solid #4e565c; padding-left: 8px; color: #d6dee1; }
.pl-head > .icon { width: 15px; margin-left: 11px; }
.pl-tools { display: flex; gap: 5px; margin: 0 9px 0 18px; }
.pl-tools button { width: 16px; display: flex; }
.pl-tools .blue { color: #4fb1ea; }
.pl-head .pl-tools + .icon { width: 15px; margin: 0 6px 0 7px; }
.pl-head h1 { margin: 0; font: 13px/18px var(--sans); }
.pl-head h1 .tri-down { vertical-align: 1px; margin: 0 1px; border-top-color: #8b9498; }
.pl-win { margin-left: auto; display: flex; align-items: center; gap: 10px; padding-right: 9px; }
.pl-win .w-min { margin-bottom: 5px; }
.pl-main { flex: 1; min-height: 0; display: flex; }
.picker { width: 165px; flex: none; display: flex; flex-direction: column; padding-left: 4px; }
.picker-tabs { height: 40px; display: flex; align-items: center; gap: 31px; padding: 12px 0 0 15px; color: #545e64; }
.picker-tabs .icon.on, .modes .icon.on { color: #e6edef; }
.picker-box { flex: 1; min-height: 0; display: flex; width: 155px; border: 1px solid #242c31; background: #39434a; }
.picker-list { flex: 1; overflow: hidden; padding: 2px 1px 0 2px; }
.pat { height: 26px; margin-bottom: 3px; border: 1px solid transparent; position: relative; display: flex; align-items: center; width: 100%; }
.pat-in { position: relative; flex: 1; height: 24px; display: flex; align-items: center; gap: 3px; padding-left: 2px; background: linear-gradient(#4e585d, #464f54); border-radius: 2px; overflow: hidden; white-space: nowrap; color: #c6ced1; }
.pat-in .icon { width: 9px; height: 10px; position: relative; }
.pat-in span { position: relative; }
.pat-in .thumb { position: absolute; inset: 0; width: 100%; height: 100%; fill: #5e686d; }
.pat.sel { border-color: var(--led); }
.pat.sel::before { content: ""; position: absolute; z-index: 1; left: -2px; top: 6px; border: 6px solid transparent; border-left: 7px solid #ea3348; border-right: 0; }
.picker-add { height: 27px; width: 140px; font: 16px/20px var(--sans); color: #d6dee1; }
.vscroll { width: 15px; flex: none; display: flex; flex-direction: column; gap: 1px; background: #262e33; }
.cell { width: 100%; height: 14px; display: flex; align-items: center; justify-content: center; background: #4e575e; border: 1px solid #5d666c; flex: none; }
.cell.sq::before { content: ""; width: 3px; height: 3px; background: #1e272d; }
.vscroll b { height: 544px; background: #4d565d; border: 1px solid #5d666c; }
.vscroll s { flex: 1; background: repeating-linear-gradient(45deg, #353d43 0 1px, #3c454b 1px 3px); }
.vscroll.big { width: 20px; margin-right: 7px; margin-bottom: 4px; border: solid #262e33; border-width: 0 1px; }
.vscroll.big .cell { height: 19px; }
.vscroll.big b { height: 32px; background: #545d64; }
.arr { flex: 1; min-width: 0; display: flex; flex-direction: column; margin-bottom: 4px; border-bottom: 1px solid #22303a; }
.arr-top { display: flex; height: 40px; flex: none; }
.arr-corner { width: 111px; flex: none; display: flex; border-right: 1px solid #262e33; padding-bottom: 1px; }
.addtrack { width: 30px; border: 1px solid #2b3339; border-radius: 14px 0 0 0; background: #4a5258; font: 14px/16px var(--sans); padding-top: 16px; }
.modes { flex: 1; display: grid; grid-template-columns: 1fr 1fr 1fr; place-items: center; background: #545e64; border: 1px solid #697277; color: #7d878c; font: 8px/10px var(--sans); }
.modes .on { color: #e6edef; }
.arr-nav { flex: 1; min-width: 0; display: flex; flex-direction: column; }
.navrow { display: flex; height: 20px; gap: 1px; }
.navrow .cell { width: 18px; height: 20px; }
.navrow .chev { border-color: #262f34; }
.navrow s { width: 25px; background: #363f45; }
.minimap { flex: 1; height: 20px; background: #4d5e64; border: 1px solid #62747a; }
.minimap rect { fill: #5d6e74; }
.minimap .p { fill: #75689a; }
.ruler { flex: 1; background: #1e2a30; position: relative; overflow: hidden; color: #a3adb1; font-size: 12px; line-height: 20px; }
.ruler span { position: absolute; }
.playpos { position: absolute; left: 0; top: 2px; border-left: 3px solid #b8e667; border-top: 8px solid #b8e667; border-right: 4px solid transparent; border-bottom: 2px solid transparent; }
.tracks { flex: 1; min-height: 0; overflow: hidden; position: relative; background: #2b3940; }
.gridlines { position: absolute; left: 111px; top: 0; width: calc(100% - 111px); height: 100%; background: #2e3e48; }
.gridlines .alt { fill: #34454f; }
.gridlines line { stroke: #17252d; stroke-width: 1; shape-rendering: crispEdges; }
.track { display: flex; height: 44px; position: relative; }
.track-head { width: 100px; flex: none; background: linear-gradient(90deg, #545d62, #4a5358); border-radius: 0 7px 7px 0; border-bottom: 1px solid #3b4449; padding: 1px 0 0 3px; position: relative; line-height: 16px; color: #d3dadd; }
.track-head::after { content: "..."; position: absolute; left: 14px; bottom: 1px; color: #262e33; font-size: 15px; line-height: 16px; }
.track-head.dim { color: #7b8589; }
.track-head .led { position: absolute; right: 6px; top: 31px; }
.lane { flex: 1; margin-left: 11px; position: relative; border-bottom: 1px solid #16222a; overflow: hidden; }
.clip { position: absolute; top: 0; bottom: 0; background: rgba(36, 45, 52, .88); border-bottom: 1px solid #05090c; overflow: hidden; }
.clip-head { height: 14px; margin: 1px 1px 0 0; background: linear-gradient(#525b60, #464e53); border-radius: 2px; display: flex; align-items: center; gap: 2px; padding-left: 1px; font-size: 11px; line-height: 14px; color: #c9d1d4; white-space: nowrap; overflow: hidden; }
.clip-head .icon { width: 10px; height: 11px; }
.clip.dim .clip-head { color: #7c8589; }
.clip.auto .clip-head { background: #594a79; }
.clip.mini .icon { width: 7px; }
.clip.sliver { background: rgba(36, 45, 52, .6); }
.clip svg.notes { position: absolute; left: 0; top: 0; width: 100%; height: 100%; fill: #a0a9ad; shape-rendering: crispEdges; }
.clip.dim svg.notes, .clip.faint svg.notes { fill: #79848a; }
.clip svg.curve { position: absolute; left: 0; top: 15px; width: 100%; height: 28px; fill: rgba(110, 90, 140, .3); stroke: #a999cf; stroke-width: 2; }
```
FILE: app.js
```js
const icon = (name, cls = "") => `<svg class="icon ${cls}"><use href="#i-${name}"/></svg>`;
const $ = id => document.getElementById(id);

/* browser tree: level, icon, label, colour, flags (o open, t tall, p plugin, r rail, z last rail) */
const tree = [
  [0, "files", "Current project", "salmon", ""], [0, "recent", "Recent files", "green", ""],
  [0, "plugin", "Plugin database", "blue", "ot"],
  [1, "fx", "Effects", "dblue", "r"], [1, "gen", "Generators", "dblue", "r"], [1, "plugin", "Installed", "blue", "oz"],
  [2, "plugin", "Effects", "dblue", "r"], [2, "plugin", "Generators", "blue", "oz"],
  [3, "plugin", "CLAP", "dblue", "r"], [3, "plugin", "Fruity", "dblue", "r"], [3, "plugin", "New", "blue", "or"],
  [4, "native", "Reaktor 6", "gold", "p"], [3, "plugin", "VST", "blue", "or"],
  ...["FL Studio VSTi (multi)", "FL Studio VSTi", "Omnisphere", "Play", "play_VST_x64", "Spire_x64_v1.5.18"].map(n => [4, "gear", n, "plain", "p"]),
  [3, "plugin", "VST3", "blue", "oz"],
  ...["chipsynth C64", "Hybrid", "Kontakt 8", "Omnisphere", "Play"].map(n => [4, "gear", n, "plain", "p"]),
  [4, "native", "Reaktor 6", "gold", "p"],
  ...["Spire", "Surge XT", "Vital"].map(n => [4, "gear", n, "plain", "p"]),
  [0, "plugin", "Plugin presets", "pink", "ot"],
  [1, "fx", "Effects", "dpink", "r"], [1, "gen", "Generators", "dpink", "r"], [1, "plugin", "VST", "dpink", "z"],
  [0, "chan", "Channel presets", "dpink", "t"], [0, "mixer", "Mixer presets", "dpink", "t"], [0, "note", "Scores", "dpink", "t"],
  [0, "recent", "Backup", "green", ""], [0, "clipboard", "Clipboard files", "slate", ""], [0, "folder", "Demo projects", "slate", ""]
];
$("tree").innerHTML = tree.map(([l, ic, t, c, f]) => {
  const cls = `l${l} c-${c}${f.includes("o") ? " open" : ""}${f.includes("t") ? " tall" : ""}${f.includes("p") ? " plug" : ""}`;
  const rail = /[rz]/.test(f) ? `<i class="rail${f.includes("z") ? " last" : ""}" style="left:${12 + 14 * (l - 1)}px"></i>` : "";
  return `<li class="${cls}">${rail}${icon(ic)}<span>${t}</span></li>`;
}).join("");

/* channel rack */
const channels = [[1, "mhak k..k 169 F"], [2, "6X14BLA4"], [3, "Hat 51"], [5, "Play"], [6, "Play #2"], [7, "Spire"], [8, "000_Fl.._Piano"], [9, "CYM_RISE"], [10, "Play #3"], [11, "Hybrid"], [12, "Play #4"], [13, "Surge XT"]];
$("rack").innerHTML = channels.map(([n, name], i) => {
  const steps = n === 6
    ? `<svg class="roll"><rect x="0" y="20" width="32" height="3"/><rect x="64" y="20" width="32" height="3"/><rect x="128" y="8" width="32" height="3"/></svg>`
    : Array.from({ length: 12 }, (_, s) => `<input type="checkbox" class="step${s > 3 && s < 8 ? " red" : ""}" aria-label="${name} step ${s + 1}">`).join("");
  return `<div class="ch"><input type="checkbox" class="led" checked aria-label="${name} on"><i class="knob"></i><i class="knob ${n === 3 ? "ne" : "e"}"></i><span class="ch-num">${n}</span><button type="button" class="ch-name${n === 8 ? " teal" : ""}">${name}</button><i class="ch-sel${i ? "" : " on"}"></i>${steps}</div>`;
}).join("");

/* mixer: name, fader, pan tick, separation tick, effects on, clock on */
const inserts = [["Insert 1", 73, "", 0, 1, 1], ["Insert 2", 77, "", 0, 1, 0], ["Insert 3", 77, "tick", 0, 0, 0], ["Insert 4", 86, "", 0, 0, 0], ["Insert 5", 46, "", 0, 1, 0], ["Insert 6", 73, "tick y", 1, 1, 0], ["Insert 7", 69, "tick w", 1, 1, 0]];
const strip = (no, [name, val, pan, sep, fx, clk], master) => `<div class="strip${master ? " master" : ""}"><div class="strip-no">${no}</div>
<div class="strip-top"><span class="strip-name">${name}</span><i class="meter"></i></div>
<div class="strip-led"><input type="checkbox" class="led" checked aria-label="${name} on"></div>
<div class="pan"><i class="${pan}"></i></div>
<div class="strip-low"><div class="strip-icons">${icon("updown")}${icon("leftright")}<i class="sep${sep ? " b" : ""}"></i>${icon("fx", "fx" + (fx ? " gold" : ""))}${icon("clock", "clk" + (clk ? " gold" : ""))}<i class="dot"></i></div>
<input class="fader" type="range" min="0" max="100" value="${val}" aria-label="${name} level"></div>
<div class="strip-foot">${master ? `<i class="chev up"></i>${icon("down")}` : icon("triangle")}</div></div>`;
$("mixer").innerHTML = `<div class="strip"><div class="strip-no">C</div><div class="scale">${[3, 0, 3, 6, 9, 12, 15, 18, 21, 24, 27, 30].map(n => `<span>${n}</span>`).join("")}</div><div class="cur">${icon("fx")}<i class="dot"></i></div></div>`
  + strip("M", ["Master", 86, "", 0, 0, 0], true) + `<div class="mix-split"><i></i></div>`
  + inserts.map((s, i) => strip(i + 1, s)).join("") + `<div class="mix-scroll"><i class="chev left"></i><b></b></div>`;

/* playlist tools */
$("pltools").innerHTML = ["pencil", "brush", "erase", "mute", "slip", "slice", "select", "search", "playback"]
  .map(n => `<button type="button" aria-label="${n}"${n === "brush" ? ' class="blue"' : ""}>${icon(n)}</button>`).join("");

/* note shapes: [start bar, length in bars, y, height] */
const chords = rows => rows.flatMap(([s, l, ...ys]) => ys.map(y => [s, l, y, 2]));
const melody = [23, 32, 40, 42, 32, 36, 40, 30, 23, 17, 40, 30, 32, 36, 30, 32].map((y, i) => [i / 2, .5, y, 2]);
const dots = list => list.map(([s, y]) => [s, .12, y, 3]);
const four = dots([[.05, 36], [.4, 25], [.85, 17], [.85, 36], [1.3, 25], [1.8, 25], [2.05, 36], [2.3, 30], [2.6, 36], [2.9, 17], [3, 25], [3.3, 20], [3.5, 36], [3.75, 41], [3.9, 19]]);
const busy = dots([[.05, 36], [.15, 17], [.3, 23], [.45, 36], [.6, 36], [.75, 36], [.85, 25], [1, 30], [1.2, 41], [1.3, 33], [1.5, 36], [1.65, 30], [1.9, 36], [2.1, 17], [2.2, 23], [2.4, 36], [2.6, 25], [2.75, 36], [2.9, 28], [3.1, 36], [3.3, 33], [3.5, 36], [3.6, 30], [3.8, 41], [3.9, 33]]);
const dense = dots([[.1, 17], [.3, 19], [.5, 17], [.7, 29], [.9, 29], [1, 17], [1.2, 23], [1.3, 37], [1.5, 23], [1.7, 25], [1.9, 41], [2.1, 17], [2.3, 19], [2.5, 37], [2.7, 29], [2.9, 37], [3, 17], [3.2, 23], [3.4, 25], [3.6, 29], [3.8, 23], [3.9, 41]]);
const shapes = {
  one: chords([[0, 2, 20, 24, 27, 39], [2, 1, 18, 22, 26, 38], [3, 1, 16, 18, 24, 27, 36], [4, 1, 19, 22, 26, 39], [5, 1, 22, 26, 29, 41], [6, 1, 16, 18, 24, 27, 36], [7, 1, 19, 22, 26, 38]]),
  four: chords([[0, 2, 22, 31, 37], [2, 1, 20, 26, 31, 35], [3, 1, 17, 20, 31], [4, 1, 22, 31, 37], [5, 1, 26, 35, 41], [6, 1, 17, 20, 31], [7, 1, 20, 26, 35]]),
  bass: [18, 27, 31, 27, 18, 27, 31, 40].map((y, i) => [i, 1, y, 4]),
  rise: chords([[0, 1, 28, 40], [1, 1, 25, 37], [2, 1, 22, 33], [3, 1, 31, 41], [4, 1, 28, 40], [5, 1, 25, 37], [6, 1, 20, 32], [7, 1, 17, 28]]),
  melody, drum: four, busy, dense,
  tri: [[0, 31], [.35, 31], [.65, 31], [1, 27], [1.3, 27], [1.65, 27], [2, 18], [2.3, 18], [2.6, 18], [3, 38], [3.25, 38], [3.65, 38]].map(([s, y]) => [s, .12, y, 5]),
  intro: [[0, 1, 30, 4], [1, 1, 17, 4], [2, 1, 21, 4], [3, 1, 38, 4]],
  hit: [[.6, 1.3, 40, 3]], ticks: [.1, .3, .9, 1.3].map(s => [s, .12, 40, 2]), tick: [.4, 1.4].map(s => [s, .12, 40, 2]), line: [[0, .9, 40, 2]], none: []
};
const rects = list => list.map(([s, l, y, h]) => `<rect x="${s}" y="${y}" width="${l}" height="${h}"/>`).join("");

/* clips per track: [start, end, label, shape, flags (d dim, s sliver, a automation, f faint notes)] */
const run = (start, count, len, label, shape, flags) => Array.from({ length: count }, (_, i) => [start + i * len, start + (i + 1) * len, label, shape, flags]);
const full = (n, shape) => [...run(11, 6, 8, "Pattern " + n, shape, ""), ...run(60, 4, 8, "Pattern " + n, shape, ""), [92, 97, "Pa.." + n, shape, ""]];
const tail = (n, rest) => [...rest, [92, 97, "Pat.." + n, "bass", ""]];
const clips = {
  1: [[7, 11, "P..1", "one", "d"], ...full(1, "one"), [59, 60, "", "one", "s"]],
  2: [[7, 11, "F..ff", "curve", "da"], ...full(4, "four")],
  6: tail(5, [[35, 43, "Pattern 17", "rise", ""], [43, 51, "Pattern 20", "melody", ""], [51, 52, "", "line", "s"], ...run(76, 2, 8, "Pattern 25", "bass", "")]),
  7: [...run(11, 4, 4, "P..6", "drum", "d"), ...run(27, 4, 4, "Pa..", "busy", "d"), ...run(43, 2, 4, "P..6", "drum", "d"), ...run(60, 2, 4, "Pa..", "busy", "d"), ...run(68, 4, 4, "Pa..", "dense", "d"), ...run(84, 2, 4, "P..6", "drum", "d")],
  8: [...run(3, 6, 4, "P..5", "drum", "d"), ...run(27, 4, 4, "Pa..", "busy", "d"), ...run(43, 2, 4, "P..7", "drum", "d"), ...run(51, 2, 4, "Pa..", "busy", "d"), ...run(60, 2, 4, "Pa..", "busy", "d"), ...run(68, 4, 4, "Pa..", "dense", "d"), ...run(84, 2, 4, "P..5", "drum", "d")],
  10: [...run(11, 12, 4, "Pa..", "tri", "d"), ...run(60, 6, 4, "Pa..", "tri", "d")],
  11: tail(6, [[19, 27, "Pattern 19", "melody", ""], ...run(43, 2, 8, "Pattern 19", "melody", ""), [72, 76, "Pa..", "melody", "d"], [76, 84, "Pattern 19", "melody", ""], [84, 92, "Pattern 26", "bass", ""]]),
  12: tail(7, [[7, 11, "Pa..", "intro", "d"], [11, 12, "", "line", "s"], [19, 27, "Pattern 18", "melody", ""], ...run(43, 2, 8, "Pattern 18", "melody", ""), [72, 76, "Pa..", "melody", "d"], [76, 84, "Pattern 18", "melody", ""], [84, 92, "Pattern 27", "bass", ""]]),
  13: tail(0, [[59, 60, "", "line", "s"], [76, 84, "Pattern 29", "melody", ""], [84, 92, "Pattern 30", "bass", ""]]),
  15: [[11, 17, "Fas..off", "slope", "a"], ...[1, 25, 41, 49, 57, 70, 82, 94].map(s => [s, s + 2, "", "hit", ""])],
  16: [...run(11, 20, 2, "", "ticks", "f"), ...run(60, 12, 2, "", "ticks", "f")],
  17: [...run(11, 20, 2, "", "tick", "f"), ...run(60, 12, 2, "", "tick", "f")],
  18: [[11, 15, "F..ff", "slope", "da"], ...run(35, 15, 1, "", "line", "sf"), ...run(68, 16, 1, "", "line", "sf")]
};
const BARS = 108.9, pct = v => (v / BARS * 100).toFixed(3) + "%";
const curves = { curve: "M0 28C50 25 80 15 100 0V28z", slope: "M0 22L100 2V28H0z" };
const edge = { curve: "M0 28C50 25 80 15 100 0", slope: "M0 22L100 2" };
const clip = ([a, b, label, shape, f]) => {
  const body = curves[shape]
    ? `<svg class="curve" viewBox="0 0 100 28" preserveAspectRatio="none"><path d="${curves[shape]}" stroke="none"/><path d="${edge[shape]}" fill="none" vector-effect="non-scaling-stroke"/></svg>`
    : `<svg class="notes" viewBox="0 0 ${b - a} 43" preserveAspectRatio="none">${rects(shapes[shape])}</svg>`;
  const ic = f.includes("a") ? "autoclip" : f.includes("s") ? "clipdim" : "clip";
  return `<div class="clip${f.includes("d") ? " dim" : ""}${f.includes("f") ? " faint" : ""}${f.includes("a") ? " auto" : ""}${f.includes("s") ? " mini sliver" : ""}" style="left:${pct(a - 1)};width:${pct(b - a)}"><div class="clip-head">${icon(ic)}<span>${label}</span></div>${body}</div>`;
};
let grid = "";
for (let b = 0; b < BARS; b += 16) grid += `<rect class="alt" x="${pct(b)}" y="0" width="${pct(8)}" height="100%"/>`;
for (let b = 0; b < BARS; b += 2) grid += `<line x1="${pct(b)}" x2="${pct(b)}" y1="0" y2="100%"/>`;
const dim = [3, 4, 5, 14, 19, 20];
$("tracks").innerHTML = `<svg class="gridlines">${grid}</svg>` + Array.from({ length: 21 }, (_, i) => i + 1).map(n =>
  `<div class="track"><div class="track-head${dim.includes(n) ? " dim" : ""}">Track ${n}<input type="checkbox" class="led" checked aria-label="Track ${n} on"></div><div class="lane">${(clips[n] || []).map(clip).join("")}</div></div>`).join("");

$("ruler").innerHTML = Array.from({ length: 28 }, (_, i) => i * 4).map(b => `<span style="left:${pct(b)}">${b ? b + 1 : "&nbsp;1"}</span>`).join("") + `<i class="playpos"></i>`;
$("minimap").innerHTML = Object.entries(clips).flatMap(([t, list]) => list.map(([a, b, , , f]) => `<rect class="${f.includes("a") ? "p" : ""}" x="${a - 1}" y="${t - 1}" width="${b - a - .15}" height="1"/>`)).join("");

/* pattern picker */
const thumbs = { 1: "one", 2: "melody", 3: "melody", 4: "four", 5: "drum", 6: "drum", 7: "drum", 8: "tick", 9: "tick", 10: "tri", 11: "line", 12: "rise", 13: "line", 14: "dense", 15: "dense", 16: "line", 17: "rise", 18: "melody", 19: "melody", 20: "melody", 21: "bass", 22: "busy", 23: "busy", 24: "busy", 25: "bass", 26: "bass", 27: "bass", 28: "line", 29: "melody", 30: "bass" };
const span = { drum: 4, tri: 4, busy: 4, dense: 4 };
$("picker").innerHTML = Array.from({ length: 30 }, (_, i) => i + 1).map(n =>
  `<button type="button" class="pat${n === 6 ? " sel" : ""}"><span class="pat-in"><svg class="thumb" viewBox="0 15 ${span[thumbs[n]] || 8} 30" preserveAspectRatio="none">${rects(shapes[thumbs[n]])}</svg>${icon("clip")}<span>Pattern ${n}</span></span></button>`).join("");
```
